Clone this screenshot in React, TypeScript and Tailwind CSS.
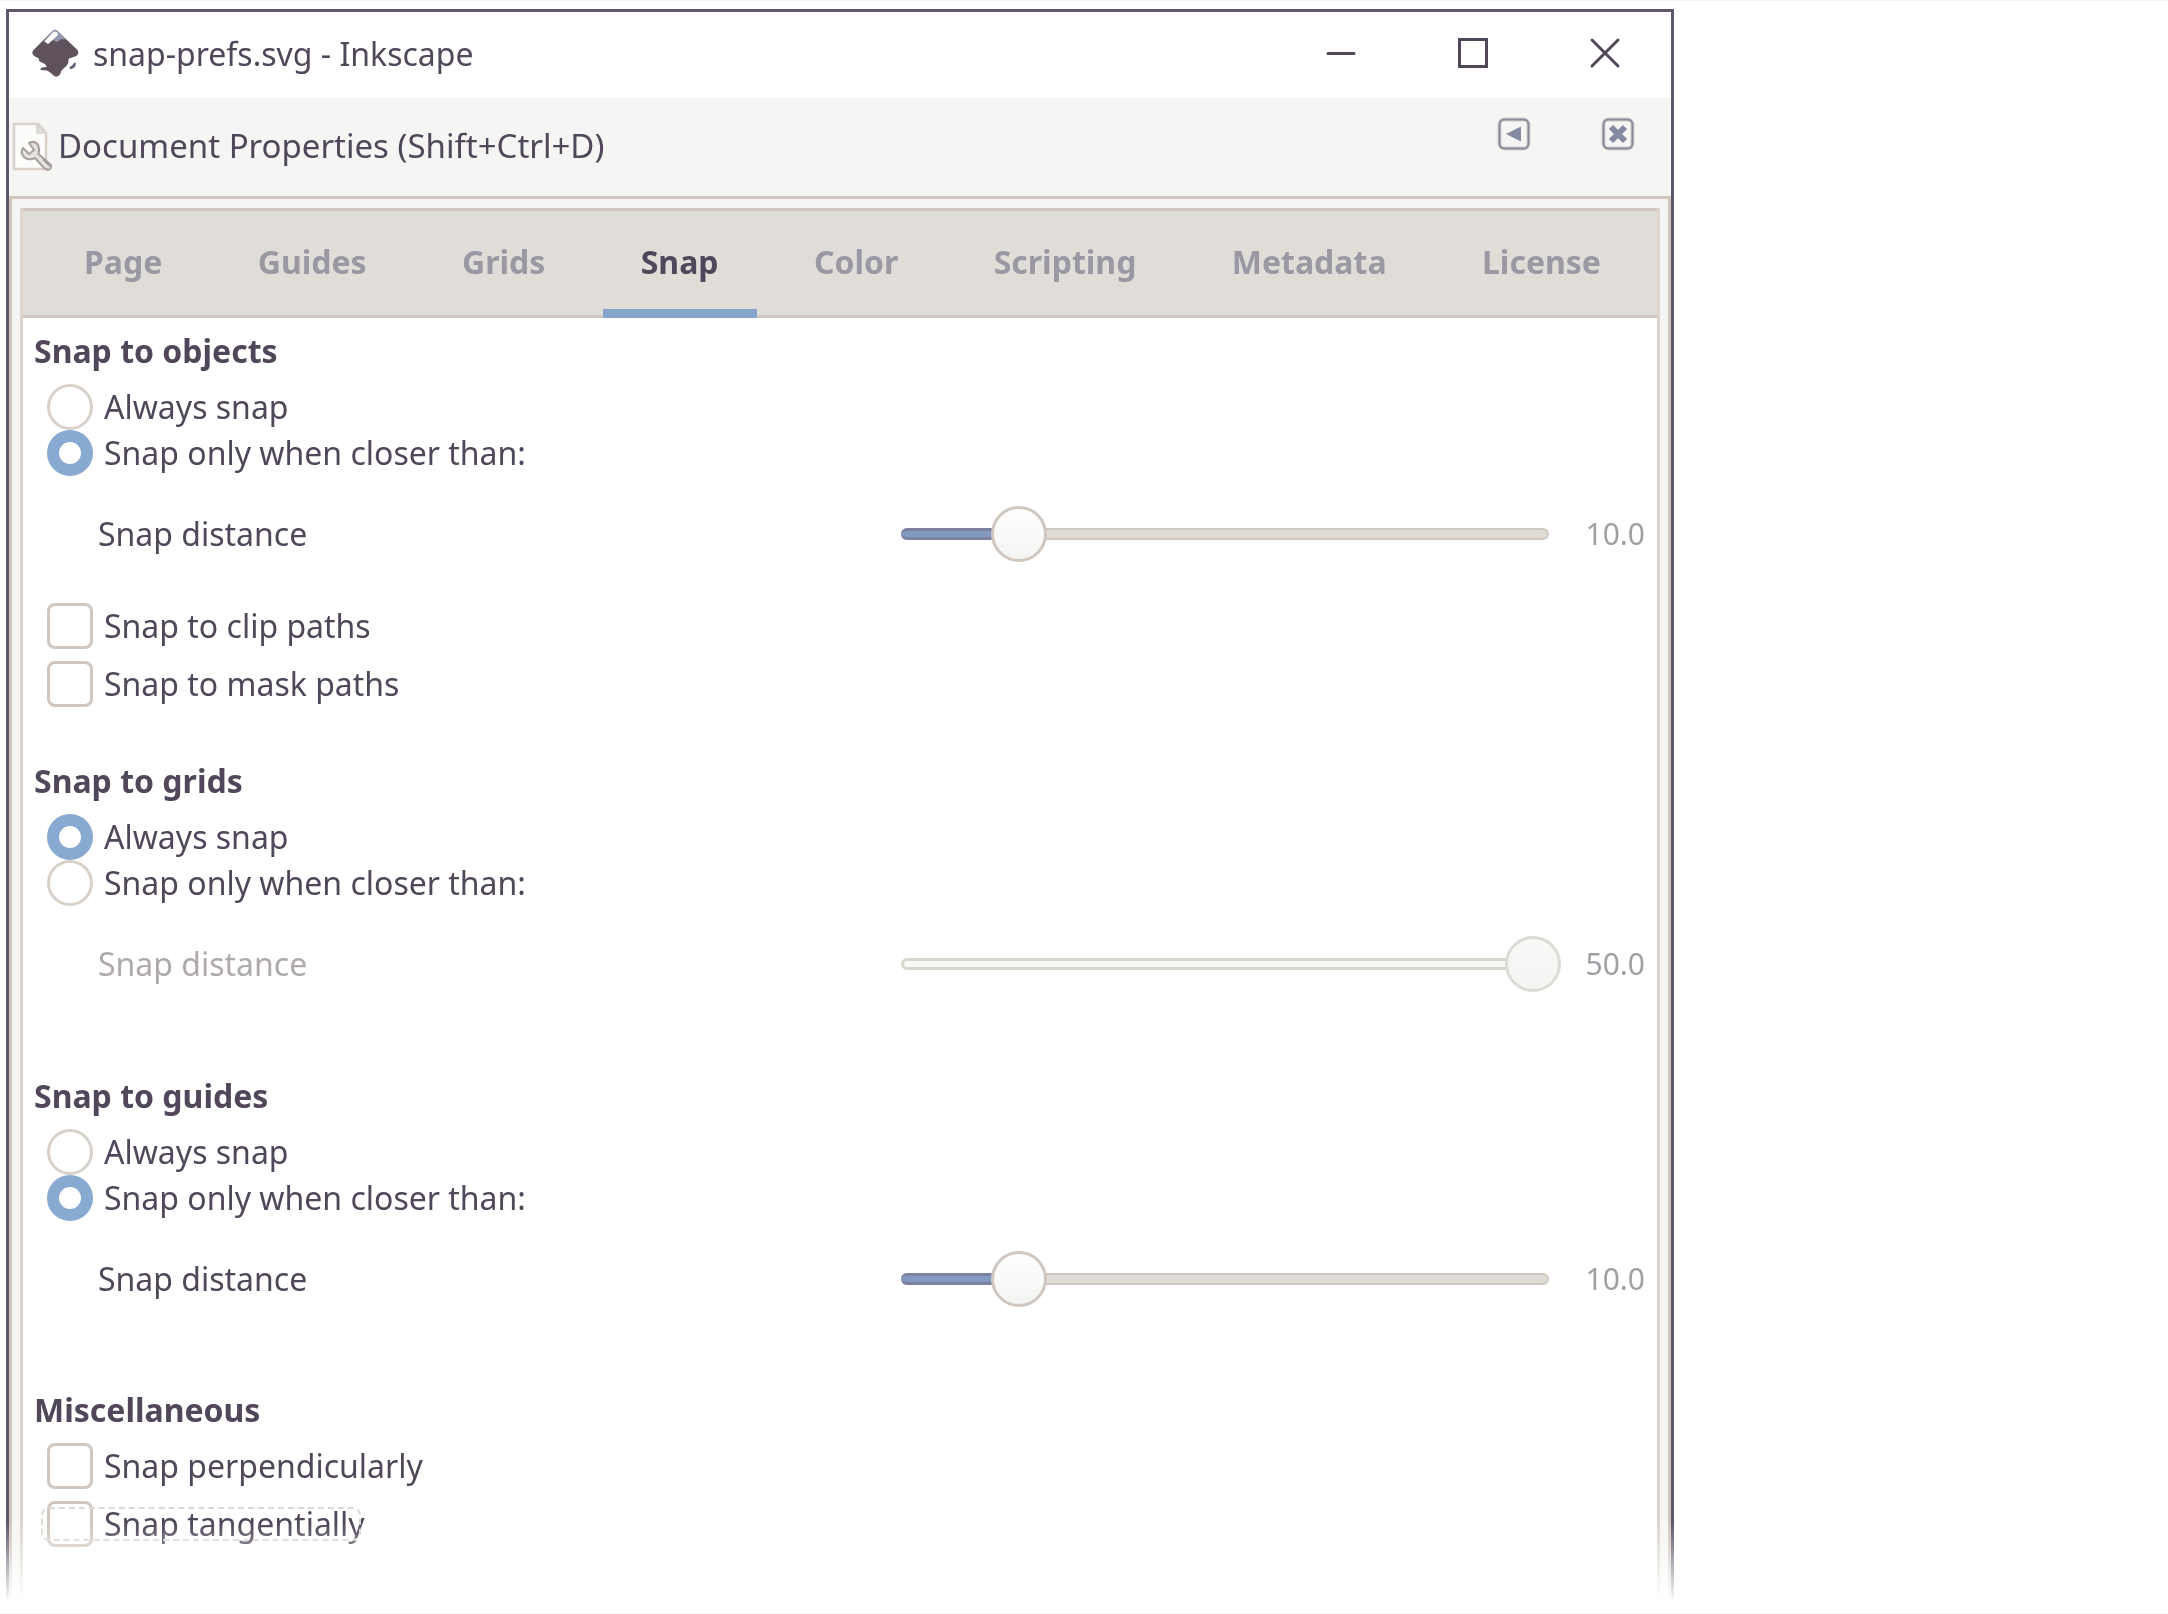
import { useState } from "react";

function InkscapeLogo() {
  return (
    <svg viewBox="0 0 47 48" className="h-12 w-[47px] shrink-0" aria-hidden="true">
      <path
        d="M20.5 2 Q23 -0.5 25.5 2 L45 20.5 Q48 24 44.5 27 L37 29.5 Q36 31 36.5 33.5 Q35 37.5 31 40 Q28.5 42 28 45.5 Q24.5 49.5 21 46 Q18.5 43 15 41.5 L9 41 Q7.5 39.5 10 38.5 L14.5 38 Q15 36 11 34 Q5.5 32 7 29.5 L3 27.5 Q-1.5 24.5 1.5 21 Z"
        fill="#60525d"
      />
      <path d="M20.5 2 Q23 -0.5 25.5 2 L34 10.5 L29 10 L25 13 L21 11 L17 14.5 L11.5 12 Z" fill="#8f98ae" />
      <path d="M21.5 2.500 L25 3 L26 6 L16 15 L12.5 12.5 Z" fill="#ffffff" />
      <path d="M37.5 39.5 Q37 37.5 39.5 37 L43 33 Q44.5 34.5 43.5 37 Q41 41.5 37.5 39.5 Z" fill="#6b6478" />
    </svg>
  );
}

function DocumentIcon() {
  return (
    <svg viewBox="0 0 42 50" className="h-[50px] w-[42px] shrink-0" fill="none" aria-hidden="true">
      <path d="M2 2 H26 L34 11 V47 H2 Z" fill="#fcfcfb" stroke="#d8d2cb" strokeWidth="2.5" />
      <path d="M25 2 V11 H34 Z" fill="#e0dcd6" stroke="#d8d2cb" strokeWidth="1.5" />
      <path
        d="M17 21 Q23 18 26 23 Q28 27 26.500 32 L39 43 Q40 47 36 48 L32 46 L23 36 Q16 39 12 35 Q8 31 11 26 L17 32 L22 28 Z"
        fill="#e6e2de"
        stroke="#aaa0a0"
        strokeWidth="2"
        strokeLinejoin="round"
      />
      <path d="M31 37 L38 44" stroke="#9d97a0" strokeWidth="2" />
    </svg>
  );
}

function TitleBar() {
  return (
    <header className="flex h-[86px] items-center bg-white pr-[50px] pb-1 pl-[23px]">
      <InkscapeLogo />
      <h1 className="ml-[14px] flex-1 pt-0.5 leading-[46px]">snap-prefs.svg - Inkscape</h1>
      <div className="flex gap-[100px]">
        <button type="button" aria-label="Minimize">
          <svg viewBox="0 0 32 32" className="size-8" stroke="currentColor" strokeWidth="3" strokeLinecap="round">
            <path d="M3 16.500 H29" />
          </svg>
        </button>
        <button type="button" aria-label="Maximize">
          <svg viewBox="0 0 32 32" className="size-8" fill="none" stroke="currentColor" strokeWidth="3">
            <rect x="2.500" y="2.500" width="27" height="27" />
          </svg>
        </button>
        <button type="button" aria-label="Close">
          <svg viewBox="0 0 32 32" className="size-8" stroke="currentColor" strokeWidth="3" strokeLinecap="round">
            <path d="M3 3 L29 29 M29 3 L3 29" />
          </svg>
        </button>
      </div>
    </header>
  );
}

function DialogHeader() {
  return (
    <div className="flex h-[98px] items-center bg-[#f5f5f3] pr-9 pl-[3px]">
      <DocumentIcon />
      <h2 className="ml-1 flex-1 pb-0.5 text-[33px] leading-[46px]">Document Properties (Shift+Ctrl+D)</h2>
      <div className="flex gap-[70px] self-start pt-[19px] text-[#858aa0]">
        <button type="button" aria-label="Iconify dialog">
          <svg viewBox="0 0 34 34" className="size-[34px]" fill="none">
            <rect x="2.500" y="2.500" width="29" height="29" rx="5" stroke="#d6cfc9" strokeWidth="4" />
            <rect x="2.500" y="2.500" width="29" height="29" rx="5" stroke="currentColor" strokeWidth="2" />
            <path d="M9 17 L24 9.500 V24.500 Z" fill="currentColor" />
          </svg>
        </button>
        <button type="button" aria-label="Close dialog">
          <svg viewBox="0 0 34 34" className="size-[34px]" fill="none">
            <rect x="2.500" y="2.500" width="29" height="29" rx="5" stroke="#d6cfc9" strokeWidth="4" />
            <rect x="2.500" y="2.500" width="29" height="29" rx="5" stroke="currentColor" strokeWidth="2" />
            <path d="M10 10 L24 24 M24 10 L10 24" stroke="currentColor" strokeWidth="6" />
          </svg>
        </button>
      </div>
    </div>
  );
}

const tabs = ["Page", "Guides", "Grids", "Snap", "Color", "Scripting", "Metadata", "License"];

function TabBar() {
  const [active, setActive] = useState("Snap");
  return (
    <div
      role="tablist"
      className="flex h-[110px] justify-between border-t-[3px] border-[#d0c8c0] bg-[#e0ddd8] pr-[18px] pl-[23px] shadow-[inset_0_-3px_0_#d0c8c0]"
    >
      {tabs.map((tab) => (
        <button
          key={tab}
          type="button"
          role="tab"
          aria-selected={tab === active}
          onClick={() => setActive(tab)}
          className="border-b-[9px] border-transparent px-[38px] pt-1 leading-[46px] font-bold text-[#9a98a3] aria-selected:border-[#86a5cc] aria-selected:text-[#50475a]"
        >
          {tab}
        </button>
      ))}
    </div>
  );
}

function Radio({ name, label, defaultChecked }: { name: string; label: string; defaultChecked?: boolean }) {
  return (
    <label className="ml-6 flex w-fit items-center gap-[11px] leading-[46px]">
      <input
        type="radio"
        name={name}
        defaultChecked={defaultChecked}
        className="size-[46px] appearance-none rounded-full border-[3px] border-[#d8d1ca] bg-white checked:border-[12px] checked:border-[#88a9d0]"
      />
      {label}
    </label>
  );
}

function Check({ label, focused }: { label: string; focused?: boolean }) {
  return (
    <label className="relative ml-6 flex w-fit items-center gap-[11px] leading-[46px]">
      <input
        type="checkbox"
        className="size-[46px] appearance-none rounded-lg border-[3px] border-[#d0c8c0] bg-white checked:bg-[#88a9d0]"
      />
      {label}
      {focused && (
        <span className="absolute top-[6px] right-1 bottom-[6px] left-[-6px] rounded-lg border-2 border-dashed border-[#ddd8d2]" />
      )}
    </label>
  );
}

function Distance({ id, initial, disabled }: { id: string; initial: number; disabled?: boolean }) {
  const [value, setValue] = useState(initial);
  return (
    <div className="mt-[30px] flex h-14 items-center">
      <label htmlFor={id} className={disabled ? "ml-[75px] flex-1 text-[#b0a9a9]" : "ml-[75px] flex-1"}>
        Snap distance
      </label>
      <div className="relative flex h-14 w-[648px] items-center">
        <div
          className={
            disabled
              ? "h-3 w-full overflow-hidden rounded-full border-[3px] border-[#dbd5cf] bg-[#f8f8f7]"
              : "h-3 w-full overflow-hidden rounded-full border-2 border-[#d0c8c0] bg-[#e0ddd8]"
          }
        />
        {!disabled && (
          <div
            className="absolute left-0 h-3 rounded-l-full border-y-[3px] border-[#7c82a0] bg-[#8299c0]"
            style={{ width: `${(value / 50) * 100}%` }}
          />
        )}
        <input
          id={id}
          type="range"
          min={0}
          max={50}
          value={value}
          disabled={disabled}
          onChange={(event) => setValue(Number(event.target.value))}
          className="absolute -left-[38px] h-14 w-[calc(100%+50px)] appearance-none bg-transparent [&::-webkit-slider-thumb]:size-14 [&::-webkit-slider-thumb]:appearance-none [&::-webkit-slider-thumb]:rounded-full [&::-webkit-slider-thumb]:border-[3px] [&::-webkit-slider-thumb]:border-[#d0c8c0] [&::-webkit-slider-thumb]:bg-linear-to-b [&::-webkit-slider-thumb]:from-white [&::-webkit-slider-thumb]:to-[#f4f4f2] disabled:[&::-webkit-slider-thumb]:border-[#dedad4] disabled:[&::-webkit-slider-thumb]:from-[#f8f8f7]"
        />
      </div>
      <output htmlFor={id} className="w-[108px] pr-3 pb-0.5 text-right text-[30px] text-[#a39ea5]">
        {value.toFixed(1)}
      </output>
    </div>
  );
}

function Heading({ children }: { children: string }) {
  return <h3 className="mb-[10px] pl-[11px] leading-[46px] font-bold">{children}</h3>;
}

export default function App() {
  return (
    <div className="min-h-screen border-y border-[#f3f3f2] bg-white pt-2 pr-[494px] pl-1.5 font-['Noto_Sans','Open_Sans',sans-serif] text-[32px] text-[#50475a]">
      <main className="border-x-[3px] border-t-[3px] border-[#62586d] bg-[#f5f5f3] [mask-image:linear-gradient(to_bottom,black_calc(100%-80px),transparent)]">
        <TitleBar />
        <DialogHeader />
        <div className="border-x-[3px] border-t-[3px] border-[#d0c8c0] px-2 pt-[9px]">
          <div className="border-x-[3px] border-[#ddd6cf] bg-white">
            <TabBar />
            <div className="pt-[10px] pb-14">
              <section>
                <Heading>Snap to objects</Heading>
                <Radio name="objects" label="Always snap" />
                <Radio name="objects" label="Snap only when closer than:" defaultChecked />
                <Distance id="objects-distance" initial={10} />
                <div className="mt-[41px] grid gap-3">
                  <Check label="Snap to clip paths" />
                  <Check label="Snap to mask paths" />
                </div>
              </section>
              <section className="mt-[51px]">
                <Heading>Snap to grids</Heading>
                <Radio name="grids" label="Always snap" defaultChecked />
                <Radio name="grids" label="Snap only when closer than:" />
                <Distance id="grids-distance" initial={50} disabled />
              </section>
              <section className="mt-[81px]">
                <Heading>Snap to guides</Heading>
                <Radio name="guides" label="Always snap" />
                <Radio name="guides" label="Snap only when closer than:" defaultChecked />
                <Distance id="guides-distance" initial={10} />
              </section>
              <section className="mt-[80px]">
                <Heading>Miscellaneous</Heading>
                <div className="grid gap-3">
                  <Check label="Snap perpendicularly" />
                  <Check label="Snap tangentially" focused />
                </div>
              </section>
            </div>
          </div>
        </div>
      </main>
    </div>
  );
}
